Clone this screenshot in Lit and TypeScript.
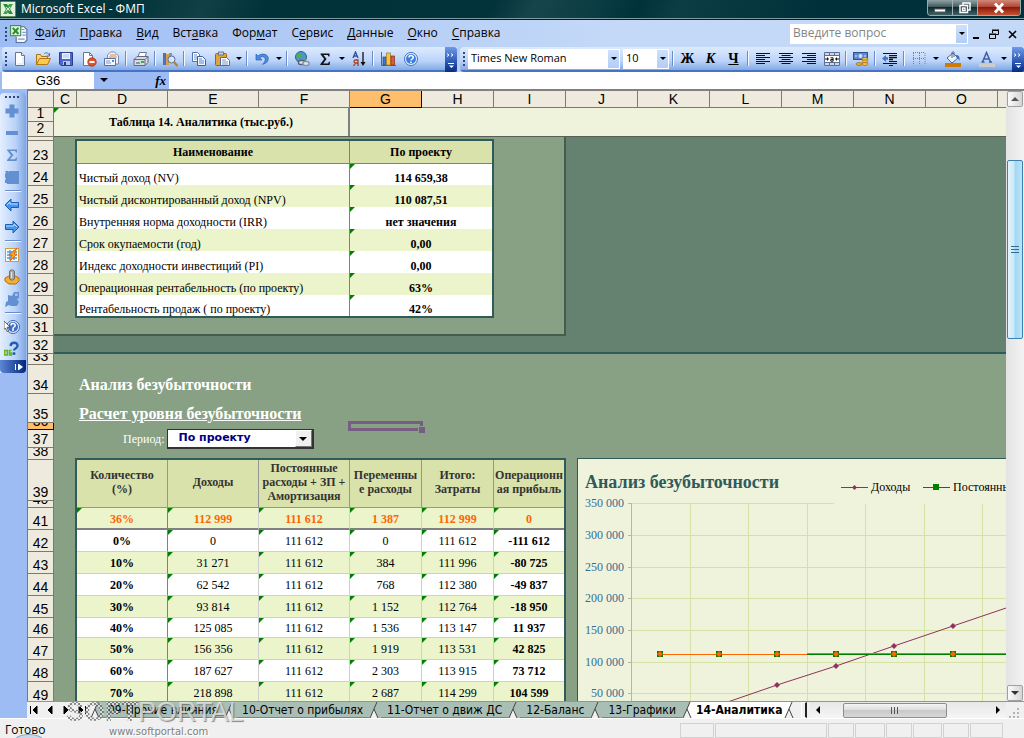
import { LitElement, html, svg, css, nothing } from "lit";
import type { TemplateResult } from "lit";
import { customElement } from "lit/decorators.js";
import { classMap } from "lit/directives/class-map.js";
import { styleMap } from "lit/directives/style-map.js";

const icons: Record<string, TemplateResult> = {
  excel: svg`<rect x=".5" y=".5" width="15" height="15" rx="1" fill="#e4f0dc" stroke="#5b8a55"/><path d="M3 3h4l6 10H9z" fill="#2b8a3a"/><path d="M13 3H9L3 13h4z" fill="#3fa64c"/><path d="M6 6l4 4M10 6l-4 4" stroke="#fff" stroke-width=".8"/>`,
  book: svg`<path d="M6.500 1.500h6l2.500 2.500v9.500l-2 2H5.500v-5" fill="#f4f8ff" stroke="#56719e"/><path d="M10 4h3M11 6.500h3M11 9h3M7 12.500h6" stroke="#7b9bd0"/><rect x=".5" y=".5" width="9" height="9" fill="#e3f2dc" stroke="#4d8a4d"/><path d="M2.500 2.500l5 5.500M7.500 2.500l-5 5.500" stroke="#239036" stroke-width="1.800"/>`,
  fresh: svg`<path d="M3.500 1.500h6l3 3v10h-9z" fill="#fff" stroke="#6a7793"/><path d="M9.500 1.500v3h3" fill="#dfe7f5" stroke="#6a7793"/><path d="M11 6v7H5" fill="none" stroke="#d3dff2"/>`,
  open: svg`<path d="M1.500 13.500v-10h4l1 2h6v2" fill="#f7d774" stroke="#a8741a"/><path d="M1.500 13.500l3-6h11l-3 6z" fill="#fbc94e" stroke="#b5761a"/><path d="M9 3c2-2 4-1.500 5 1M14.500 2v3h-3" fill="none" stroke="#54749e"/>`,
  save: svg`<path d="M1.500 1.500h13v13H3l-1.500-1.500z" fill="#4a66c8" stroke="#2b3f8d"/><rect x="4" y="2" width="8" height="6" fill="#eef3ff"/><path d="M5 4h6M5 6h6" stroke="#a8b9e6"/><rect x="5" y="10" width="7" height="4" fill="#b8c5e8"/><rect x="6" y="11" width="2" height="3" fill="#233a80"/>`,
  lockdoc: svg`<path d="M2.500 1.500h6l3 3v10h-9z" fill="#fff" stroke="#6a7793"/><path d="M8.500 1.500v3h3" fill="none" stroke="#6a7793"/><circle cx="11" cy="11" r="4.200" fill="#e0532d" stroke="#a52f12" stroke-width=".8"/><path d="M8.500 11h5" stroke="#fff" stroke-width="2"/>`,
  mail: svg`<path d="M3.500 7V4l3-3h4l4 4v8h-3" fill="#eef3fc" stroke="#7c8db0"/><path d="M6 4h6M5 6h8" stroke="#d7884d"/><path d="M.5 7.500h11v7H.5z" fill="#f4f7fd" stroke="#5d6f96"/><path d="M2 10h4M2 12h5" stroke="#8397bf"/><rect x="8" y="9" width="2" height="2" fill="#5a83cf"/>`,
  print: svg`<path d="M5 6l1.500-4.500h7L12 6z" fill="#fff" stroke="#6b7894"/><path d="M1 8.500L4 5.500h11v6l-3 3H1z" fill="#d6dbe4" stroke="#606b82"/><path d="M1 8.500h11v6M12 8.500l3-3" fill="none" stroke="#606b82"/><rect x="8" y="10" width="3" height="2" fill="#33b13d"/><path d="M3 12h4" stroke="#444e63"/>`,
  research: svg`<path d="M1 2h3v12H1z" fill="#5070bd"/><path d="M4 3h3v11H4z" fill="#d4a04d"/><path d="M7 2h3v9H7z" fill="#7a94ce"/><path d="M10 3l3 1-1 5h-3z" fill="#c4d2ee"/><circle cx="9.500" cy="8.500" r="3.500" fill="#d9ecff" fill-opacity=".9" stroke="#59708f"/><path d="M12 11l3.500 4" stroke="#b8802b" stroke-width="2.200"/>`,
  copy: svg`<path d="M1.500 1.500h5l2 2v7h-7z" fill="#fff" stroke="#5474b0"/><path d="M3 4h3M3 6h4M3 8h4" stroke="#6c8fd0"/><path d="M6.500 5.500h5l3 3v6h-8z" fill="#f2f7ff" stroke="#3d5fa0"/><path d="M8 8h3M8 10h5M8 12h5" stroke="#5a82cf"/>`,
  paste: svg`<rect x="1.500" y="2.500" width="11" height="12" rx="1" fill="#e0a23e" stroke="#9b6413"/><rect x="4.500" y="1" width="5" height="3" fill="#c7ccd8" stroke="#5f6980" stroke-width=".8"/><path d="M6.500 6.500h6l3 3v5h-9z" fill="#fff" stroke="#5a6a90"/><path d="M8 9h4M8 11h6M8 13h6" stroke="#7b95cc"/>`,
  undo: svg`<path d="M2 3v6h6L5.800 7c2-2.200 5.400-1.500 5.400 1.500 0 2-1.200 3.500-2.700 4.800 4-1 5.800-3 5.800-5.600C14.300 3 8 1.600 4 5z" fill="#4d8be0" stroke="#2860b8" stroke-width=".7"/>`,
  link: svg`<circle cx="7" cy="6" r="5.500" fill="#4c94d6" stroke="#2f6090"/><path d="M3 3c3-2 4 0 6 1 0 2-4 1-4 4-2 0-3-3-2-5z" fill="#4fae4b"/><path d="M9 7c2-1 3 0 2.500 1.500H9z" fill="#4fae4b"/><rect x="4.500" y="9.500" width="6" height="4" rx="2" fill="#dfe4ee" stroke="#57607a" stroke-width="1.400"/><rect x="9" y="10.500" width="6" height="4" rx="2" fill="#dfe4ee" stroke="#8790a6" stroke-width="1.400"/>`,
  sigma: svg`<path d="M3.500 2.500h9v3h-1l-.8-1.500H6.500L9.500 8l-3.300 4.500h4.900l.9-1.800h1l-.4 3.300H3.300v-.8L7.200 8 3.500 3.300z" fill="#111"/>`,
  sort: svg`<path d="M2 7l2.500-6L7 7M3 5h3" fill="none" stroke="#2e4f94" stroke-width="1.300"/><path d="M7 15V9H4.500a1.500 1.500 0 000 3H7M4.500 12L2.500 15" fill="none" stroke="#a0412e" stroke-width="1.300"/><path d="M12 1v12" stroke="#111" stroke-width="1.300"/><path d="M9.500 11h5L12 15z" fill="#111"/>`,
  chart: svg`<path d="M1.500 1v13.500H16" fill="none" stroke="#54658a"/><rect x="3" y="6" width="3" height="8" fill="#4777c9" stroke="#27498e" stroke-width=".7"/><rect x="6.500" y="2" width="4" height="12" fill="#f4c63a" stroke="#a7761a" stroke-width=".7"/><rect x="11" y="5" width="3.500" height="9" fill="#dd5b34" stroke="#8d2c12" stroke-width=".7"/>`,
  help: svg`<circle cx="8" cy="8" r="6.500" fill="#eaf2ff" stroke="#3a72cc"/><circle cx="8" cy="8" r="5" fill="#3d7edb"/><path d="M6 6.500C6 4 10.200 4 10.200 6.400 10.200 8 8 8 8 9.500" fill="none" stroke="#fff" stroke-width="1.500"/><circle cx="8" cy="11.400" r=".9" fill="#fff"/>`,
  left: svg`<path d="M1 2.500h14M1 4.500h9M1 6.500h14M1 8.500h9M1 10.500h14M1 12.500h9" stroke="#111"/>`,
  center: svg`<path d="M1 2.500h14M3.500 4.500h9M1 6.500h14M3.500 8.500h9M1 10.500h14M3.500 12.500h9" stroke="#111"/>`,
  right: svg`<path d="M1 2.500h14M6 4.500h9M1 6.500h14M6 8.500h9M1 10.500h14M6 12.500h9" stroke="#111"/>`,
  merge: svg`<path d="M.5 1.500h15v13H.5z" fill="#fff"/><path d="M.5 1.500h15v3H.5zM.5 11.500h15v3H.5z" fill="#c9d6ee"/><path d="M.5 1.500h15v13H.5zM.5 4.500h15M.5 11.500h15M5.500 1.500v3M10.500 1.500v3M5.500 11.500v3M10.500 11.500v3" fill="none" stroke="#5f6f92"/><path d="M1 8h3M12 8h3" stroke="#111"/><path d="M3 6v4l2-2zM13 6v4l-2-2z" fill="#111"/><path d="M6.500 6.800h2.600v3.400H6.800V8.500h2.300" fill="none" stroke="#111"/>`,
  money: svg`<rect x=".5" y="1.500" width="14" height="7" fill="#5f86cf" stroke="#2f4f94"/><circle cx="7.500" cy="5" r="2" fill="#cfe0ff"/><path d="M3 4v2M12 4v2" stroke="#dfe9ff"/><ellipse cx="12" cy="8" rx="3" ry="1.500" fill="#f4c440" stroke="#9c6a10" stroke-width=".7"/><ellipse cx="12" cy="10.500" rx="3" ry="1.500" fill="#f4c440" stroke="#9c6a10" stroke-width=".7"/><ellipse cx="12" cy="13" rx="3" ry="1.500" fill="#f4c440" stroke="#9c6a10" stroke-width=".7"/><ellipse cx="6" cy="13" rx="3" ry="1.500" fill="#e5ad2e" stroke="#9c6a10" stroke-width=".7"/>`,
  outdent: svg`<path d="M1 2.500h14M7 4.500h8M7 10.500h8M1 12.500h14M7 14.500h4" stroke="#111"/><path d="M7 6.500h8M7 8.500h4" stroke="#111" stroke-width="1.600"/><path d="M0 7.500l4-3.500v2.300h2v2.400H4V11z" fill="#3d76cf"/>`,
  borders: svg`<path d="M2 1.500h12M2 7.500h12M2.500 2v12M8.500 2v12M14 2v12" stroke="#6b83b4" stroke-dasharray="1 1"/><path d="M1 14.500h14" stroke="#a9b4c8"/>`,
  fill: svg`<path d="M2 7l6-5 5 5-6 5z" fill="#edf3fb" stroke="#4c648f"/><path d="M7 7V1.500c0-1 2-1 2 0V6" fill="none" stroke="#4c648f"/><path d="M11 4c3 0 4 2 3.500 6-1-2-2-3-3-3z" fill="#3c6fc0"/><rect x="0" y="12" width="16" height="4" fill="#cf7a00"/>`,
  fontcolor: svg`<path d="M3.500 11l4-9.500L11.500 11M5 8h5M2.500 11h3M10 11h3" fill="none" stroke="#3a5fa5" stroke-width="1.500"/><rect x="0" y="12.500" width="16" height="3.500" fill="#ccc"/>`,
  plus: svg`<path d="M5.500 1.500h5v4h4v5h-4v4h-5v-4h-4v-5h4z" fill="#6390d2"/>`,
  minus: svg`<rect x="2" y="6" width="12" height="4" fill="#6390d2"/>`,
  bigsigma: svg`<path d="M3 2.500h10v3h-1L11 4H6l3.500 4L6 12.300h5l1.200-1.800h1L12.500 14H3v-.9L7 8.200 3 3.300z" fill="#6390d2"/>`,
  shape: svg`<path d="M1 2h3l1 1V2h10v13H3v-1H1v-3l1-1-1-2V5l1-1z" fill="#6390d2"/>`,
  back: svg`<path d="M1 8l6-6v3.500h7.500v5H7V14z" fill="#4496ec" stroke="#1e5cbc"/><path d="M3 8l3-3v2h8" fill="none" stroke="#b6dcff"/>`,
  next: svg`<path d="M15 8L9 2v3.500H1.500v5H9V14z" fill="#4496ec" stroke="#1e5cbc"/><path d="M13 8l-3-3v2H2" fill="none" stroke="#b6dcff"/>`,
  macro: svg`<rect x="1.500" y="1.500" width="13" height="13" fill="#fff" stroke="#d59a3c"/><path d="M3 5h10M3 8h10M3 11h10M6 3v10M10 3v10" stroke="#4f9ad8" stroke-width="1.400"/><path d="M13 1L5 8h3l-2 6 7-7h-3z" fill="#ffa321" stroke="#d4620c" stroke-width=".8"/>`,
  stamp: svg`<path d="M1 9l4-2h6l4 2v3l-3 3H5l-4-3z" fill="#f3ae34" stroke="#b5700e"/><rect x="5.500" y="1" width="5" height="10" rx="2" fill="#a9a9a9" stroke="#6f6f6f"/><path d="M7.500 3v6" stroke="#e5e5e5"/>`,
  blob: svg`<path d="M4 4l4 1 2-4h5v6l-2 1 2 3-2 4H7l-2-1-4 2 1-5 2-1z" fill="#6390d2"/><path d="M11 2.500h2.500v2.500H11z" fill="#a9c5ee"/>`,
  ask: svg`<circle cx="9" cy="8" r="6.500" fill="#e8f1ff" stroke="#3a65b0"/><circle cx="9" cy="8" r="5" fill="#3e6fc8"/><path d="M7 6.500C7 4 11.200 4 11.200 6.400 11.200 8 9 8 9 9.500V12" fill="none" stroke="#fff" stroke-width="1.500"/><path d="M0 2l6 6-3 .3L4.500 12 3 12.500 1.500 9 0 10.500z" fill="#fff" stroke="#333" stroke-width=".7"/>`,
  about: svg`<path d="M6.500 5C7 .5 14 .8 13.500 5c-.2 2.500-3.500 2.500-3.500 4.500" fill="none" stroke="#1f5fb3" stroke-width="2.400"/><circle cx="10" cy="12.500" r="1.500" fill="#1f5fb3"/><path d="M.8 9.500h2.500v4.500H.8zM7.500 9.500H5.300V14h2.200v-2H5.300" fill="none" stroke="#5db515" stroke-width="1.400"/>`,
};

const icon = (name: string) =>
  html`<svg class="icon" viewBox="0 0 16 16" aria-hidden="true">${icons[name]}</svg>`;

const menus: [string, string, string][] = [
  ["", "Ф", "айл"], ["", "П", "равка"], ["", "В", "ид"], ["Вст", "а", "вка"], ["Фор", "м", "ат"],
  ["С", "е", "рвис"], ["", "Д", "анные"], ["", "О", "кно"], ["", "С", "правка"],
];

const standardBar = ["fresh", "open", "save", "lockdoc", "mail", "|", "print", "|", "research", "|", "copy", "paste", "v", "|", "undo", "v", "|", "link", "sigma", "v", "sort", "|", "chart", "help"];
const formatBar = ["|", "Ж", "К", "Ч", "|", "left", "center", "right", "merge", "|", "money", "|", "outdent", "|", "borders", "v", "fill", "v", "fontcolor", "v"];
const sideBar = ["plus", "minus", "bigsigma", "shape", "|", "back", "next", "|", "macro", "stamp", "blob", "|", "ask", "about"];

const columns: [string, number][] = [
  ["C", 23], ["D", 91], ["E", 91], ["F", 91], ["G", 72], ["H", 72], ["I", 72],
  ["J", 72], ["K", 72], ["L", 72], ["M", 72], ["N", 72], ["O", 72],
];

const rows: [string, number][] = [
  ["", 4], ["23", 23], ["24", 22], ["25", 22], ["26", 22], ["27", 22], ["28", 22], ["29", 22], ["30", 22],
  ["31", 18], ["32", 18], ["33", 11], ["34", 29], ["35", 29], ["36", 7], ["37", 18], ["38", 12],
  ["39", 41], ["40", 7], ["41", 22], ["42", 22], ["43", 22], ["44", 22], ["45", 22], ["46", 20],
  ["47", 22], ["48", 22], ["49", 22],
];

const summary: [string, string][] = [
  ["Чистый доход (NV)", "114 659,38"],
  ["Чистый дисконтированный доход (NPV)", "110 087,51"],
  ["Внутренняя норма доходности (IRR)", "нет значения"],
  ["Срок окупаемости (год)", "0,00"],
  ["Индекс доходности инвестиций (PI)", "0,00"],
  ["Операционная рентабельность (по проекту)", "63%"],
  ["Рентабельность продаж ( по проекту)", "42%"],
];

const analysisHead = [
  ["Количество", "(%)"], ["Доходы"], ["Постоянные", "расходы + ЗП +", "Амортизация"],
  ["Переменны", "е расходы"], ["Итого:", "Затраты"], ["Операционн", "ая прибыль"],
];

const analysis: string[][] = [
  ["36%", "112 999", "111 612", "1 387", "112 999", "0"],
  ["0%", "0", "111 612", "0", "111 612", "-111 612"],
  ["10%", "31 271", "111 612", "384", "111 996", "-80 725"],
  ["20%", "62 542", "111 612", "768", "112 380", "-49 837"],
  ["30%", "93 814", "111 612", "1 152", "112 764", "-18 950"],
  ["40%", "125 085", "111 612", "1 536", "113 147", "11 937"],
  ["50%", "156 356", "111 612", "1 919", "113 531", "42 825"],
  ["60%", "187 627", "111 612", "2 303", "113 915", "73 712"],
  ["70%", "218 898", "111 612", "2 687", "114 299", "104 599"],
];

const sheetTabs = ["09-Прочие влияния", "10-Отчет о прибылях", "11-Отчет о движ ДС", "12-Баланс", "13-Графики"];
const statusCells = [34, 112, 26, 30, 26, 29, 26, 33];

const num = (text: string) => Number(text.replace(/\s/g, ""));
const chartX = (i: number) => Math.round(82 + i * 58.6);
const chartY = (value: number) => Math.round(266 - (value * 190) / 300000);

@customElement("app-root")
export class AppRoot extends LitElement {
  static styles = css`
    :host { display: block; height: 100vh; overflow: hidden; --ui: "Open Sans", "Noto Sans", sans-serif; --serif: "Liberation Serif", serif; --sans: "Liberation Sans", sans-serif; --tab: "DejaVu Sans Condensed", "DejaVu Sans", sans-serif; font: 12px/16px var(--ui); color: #000; }
    * { box-sizing: border-box; }
    button, select, input { font: inherit; color: inherit; border: 0; padding: 0; margin: 0; background: none; border-radius: 0; }
    select { appearance: none; }
    .app { display: flex; flex-direction: column; height: 100%; background: #9ebcf4; position: relative; }
    .icon { width: 16px; height: 16px; display: block; flex: none; }

    .title { height: 20px; flex: none; display: flex; align-items: center; gap: 5px; color: #fff; padding-bottom: 2px; border-bottom: 1px solid #06171c; box-shadow: inset 0 -1px #7f9da0; background: linear-gradient(115deg, #0b4045 0%, #01333a 12%, #114046 20%, #01323a 26%, #02333b 48%, #17454b 52%, #0b3d44 58%, #00323a 62%, #0c3c44 66%, #00313a 80%); }
    .title h1 { font: 12px/16px var(--ui); margin: 0; flex: 1; }
    .winbtns { display: flex; align-self: flex-start; height: 16px; margin-right: 3px; border: 1px solid #98a9ac; border-top: 0; border-radius: 0 0 4px 4px; overflow: hidden; }
    .winbtns button { width: 25px; display: grid; place-items: center; background: linear-gradient(#8fa3a6, #41585d 45%, #0c2a30 50%, #3f6266); border-right: 1px solid #a3b1b3; }
    .winbtns .close { width: 42px; border: 0; background: linear-gradient(#d08878, #b24736 45%, #8d1a0b 50%, #c65232); }

    .menubar { height: 27px; flex: none; display: flex; align-items: center; padding-left: 5px; background: linear-gradient(90deg, #9ebcf4, #c4d9f8 60%, #c4d8f8); }
    .grip { height: 14px; flex: none; background: repeating-linear-gradient(#30487e 0 2px, transparent 2px 4px); width: 2px; }
    .menubar .icon { width: 18px; height: 18px; margin: 0 1px 0 3px; }
    .menubar nav { flex: 1; display: flex; padding: 0 0 1px 6px; gap: 14px; }
    u { text-decoration-thickness: 1px; text-underline-offset: 2px; }
    .ask { display: flex; width: 178px; height: 20px; background: #fff; border: 1px solid #fff; }
    .ask input { flex: 1; min-width: 0; padding: 0 2px 2px; outline: 0; }
    .ask input::placeholder { color: #858585; opacity: 1; }
    .dropbtn { width: 11px; display: grid; place-items: center; background: linear-gradient(#cfe0fb, #b2cdf6); }
    .tri { width: 0; height: 0; border: 3px solid transparent; border-top-color: #000; border-bottom: 0; }
    .docbtns { display: flex; gap: 2px; margin-right: 4px; }
    .docbtns button { width: 16px; height: 16px; }

    .bars { height: 25px; flex: none; display: flex; gap: 3px; background: #b5cff8; }
    .bar { display: flex; align-items: center; background: linear-gradient(#deebfe, #bcd4f9 55%, #82a9e4 92%, #4773c4 93%); border-radius: 4px 0 0 4px; padding-bottom: 2px; }
    .bar.first { width: 455px; margin-left: 2px; flex: none; }
    .bar.second { flex: 1; min-width: 0; overflow: hidden; }
    .bar .grip { margin: 0 1px 0 3px; }
    .tool { width: 23px; height: 22px; flex: none; display: grid; place-items: center; }
    .tool.letter { font: bold 14px/20px var(--serif); }
    .tool.italic { font-style: italic; }
    .tool.under { text-decoration: underline; }
    .drop { width: 11px; height: 22px; flex: none; display: grid; place-items: center; }
    .sep { width: 2px; height: 15px; flex: none; background: linear-gradient(90deg, #6a8ccb 50%, #f4f8ff 50%); margin: 0 2px; }
    .more { width: 12px; align-self: stretch; margin: 0 0 -2px auto; flex: none; background: linear-gradient(#6f99e6, #2a57b2 60%, #062d7f); border-radius: 0 3px 3px 0; display: grid; place-items: center; }
    .combo { position: relative; height: 20px; flex: none; background: #fff; display: flex; margin-right: 3px; border: 1px solid #fff; font-size: 11px; }
    .combo select { width: 100%; padding: 0 14px 2px 2px; outline: 0; }
    .combo.face { width: 152px; margin-left: 2px; }
    .combo.size { width: 46px; margin-right: 1px; }
    .combo .dropbtn { position: absolute; right: 0; top: 0; bottom: 0; pointer-events: none; }

    .formula { height: 17px; flex: none; display: flex; padding-left: 2px; font: 13px/16px var(--sans); }
    .formula input { outline: 0; }
    .name { width: 92px; background: #fff; text-align: center; }
    .formula .drop { width: 20px; height: 16px; }
    .formula .drop .tri { border-width: 4px 4px 0; }
    .fx { flex: none; width: 55px; text-align: right; padding-right: 3px; font: italic bold 13px/16px var(--serif); }
    .expr { flex: 1; background: #fff; }

    .work { flex: 1; min-height: 0; display: flex; }
    .side { width: 27px; flex: none; padding: 4px 1px 0 0; }
    .sidebar { display: flex; flex-direction: column; align-items: center; background: linear-gradient(90deg, #e4effe, #b9d2f8 60%, #7fa5e0); border-radius: 4px 4px 4px 0; padding-top: 3px; }
    .sidebar .dots { width: 16px; height: 2px; background: repeating-linear-gradient(90deg, #30487e 0 2px, transparent 2px 4px); margin-bottom: 2px; }
    .sidebar button { width: 24px; height: 22px; display: grid; place-items: center; padding-right: 2px; }
    .sidebar hr { width: 16px; height: 2px; margin: 2px 0; border: 0; background: linear-gradient(#6a8ccb 50%, #f4f8ff 50%); }
    .sidebar .end { width: 100%; height: 13px; background: linear-gradient(90deg, #5c86d6, #00277c); border-radius: 0 0 4px 4px; display: flex; justify-content: flex-end; padding-right: 2px; }

    .book { flex: 1; min-width: 0; display: grid; grid-template: 46px minmax(0, 1fr) 17px / minmax(0, 1fr) 18px; border-top: 2px solid #808080; background: #f0f0f0; }
    .frozen { overflow: hidden; display: flex; flex-direction: column; }
    .cols { display: flex; height: 17px; flex: none; }
    .head { background: #eeebde; border: 0 solid #7e7a6b; border-width: 0 1px 1px 0; flex: none; display: flex; justify-content: center; align-items: flex-end; overflow: hidden; font: 14px/16px var(--sans); }
    .corner { width: 27px; border-left: 1px solid #7e7a6b; }
    .rest { flex: 1; border-right: 0; }
    .picked { background: #ffbe6b; border-color: #00007b; }
    .rowheads { width: 27px; flex: none; border-left: 1px solid #7e7a6b; background: #eeebde; display: flex; flex-direction: column; }
    .top { display: flex; flex: 1; }
    .banner { flex: 1; display: flex; background: #f0f3dc; border-bottom: 1px solid #5a5f55; font: bold 12px/28px var(--serif); }
    .banner h2 { position: relative; width: 296px; border-right: 2px solid #808080; text-align: center; font: inherit; margin: 0; }
    .scroll { overflow: hidden; display: flex; }
    .sheet { flex: 1; min-width: 0; background: #658270; overflow: hidden; display: flex; flex-direction: column; font: 12px/14px var(--serif); }

    .panel { width: 512px; flex: none; background: #88a083; border: solid #465c4e; border-width: 0 2px 2px 0; padding: 2px 0 16px 21px; }
    table { border-collapse: separate; border-spacing: 0; table-layout: fixed; border: 2px solid #2f5b5a; background: #fff; }
    th, td { padding: 0; position: relative; overflow: hidden; }
    th { background: #d9e2aa; }
    .err::before { content: ""; position: absolute; left: 0; top: 0; border: 5px solid transparent; border-width: 5px 5px 0 0; border-top-color: #008000; }
    .summary { width: 419px; }
    .summary th { height: 23px; border-bottom: 1px solid #808080; }
    .summary th:first-child, .summary td:first-child { border-right: 1px solid #808080; width: 273px; }
    .summary td { height: 22px; vertical-align: bottom; padding: 0 2px; white-space: nowrap; }
    .summary tr:first-child td, .summary tr:last-child td { height: 21px; }
    .summary td + td { font-weight: bold; text-align: center; }
    tr.alt td { background: #ebf4cb; }

    .zone { flex: 1; min-height: 0; margin-top: 16px; background: #88a083; border-top: 2px solid #2f5b5a; position: relative; }
    .zone h2, .zone h3 { color: #fff; margin: 0 0 0 25px; font: bold 16px/17px var(--serif); }
    .zone h2 { padding-top: 22px; }
    .zone h3 { padding-top: 12px; text-decoration: underline; text-decoration-thickness: 1px; }
    .period { display: flex; align-items: center; height: 20px; margin: 7px 0 0 69px; gap: 2px; }
    .period label { color: #fff; }
    .pick { position: relative; width: 147px; height: 20px; background: #fff; border: 1px solid #333; border-width: 1px 2px 2px 1px; display: flex; }
    .pick select { width: 100%; padding: 0 18px 1px 11px; font: bold 11px/14px "DejaVu Sans", sans-serif; color: #000080; outline: 0; }
    .pick .box { position: absolute; right: 0; top: 0; width: 17px; height: 17px; background: #f0f0f0; border: 1px solid #fff; border-right-color: #777; border-bottom-color: #777; display: grid; place-items: center; pointer-events: none; }
    .pick .tri { border-width: 4px 4px 0; }
    .cursor { position: absolute; left: 294px; top: 67px; width: 75px; height: 10px; border: 3px solid #785d83; }
    .cursor::after { content: ""; position: absolute; right: -5px; bottom: -5px; width: 6px; height: 6px; background: #785d83; border: solid #88a083; border-width: 1px 0 0 1px; }
    .lower { display: flex; gap: 11px; margin: 9px 0 0 21px; align-items: flex-start; }
    .analysis { width: 491px; flex: none; }
    .analysis th { height: 48px; color: #333; border: solid #969696; border-width: 0 1px 1px 0; font-size: 12px; vertical-align: middle; padding-bottom: 4px; white-space: nowrap; }
    .analysis td { height: 22px; text-align: center; border: solid #cfcfcf; border-width: 0 1px 1px 0; }
    .analysis td:first-child { border-right-color: #808080; font-weight: bold; }
    .analysis td:last-child { font-weight: bold; }
    .analysis td:last-child, .analysis th:last-child { border-right: 0; }
    .analysis tr.even td { color: #ff6600; font-weight: bold; border-bottom: 2px solid #808080; padding-top: 2px; }
    .analysis tr.short td { height: 20px; }
    .w91 { width: 91px; } .w72 { width: 72px; }
    .chart { flex: 1; min-width: 0; height: 320px; border: solid #2f5b5a; border-width: 1px 0 0 1px; background: #f0f3dc; }
    .chart svg { display: block; width: 100%; height: 320px; }
    .chart text { font-family: "Liberation Serif", serif; }

    .vbar { grid-column: 2; grid-row: 1 / 3; display: flex; flex-direction: column; background: linear-gradient(90deg, #e3e3e3, #f3f3f3); padding: 0 1px; }
    .sbtn { width: 16px; height: 16px; flex: none; display: grid; place-items: center; border: 1px solid #a0a0a0; border-radius: 2px; background: linear-gradient(90deg, #fbfbfb, #d5d5d5); }
    .vtrack { flex: 1; display: flex; flex-direction: column; }
    .vthumb { margin-top: 53px; height: 31%; border: 1px solid #3c7fb1; border-radius: 2px; background: linear-gradient(90deg, #e3f4fc, #c6e8f9 45%, #a0d6f3 50%, #bde4f8); display: grid; place-items: center; }
    .up { border: 4px solid transparent; border-top: 0; border-bottom-color: #555; }
    .down { border: 4px solid transparent; border-bottom: 0; border-top-color: #333; }

    .tabs { display: flex; border-top: 1px solid #8a9a90; grid-column: 1 / 3; font: 12px/16px var(--tab); height: 17px; min-width: 0; }
    .nav { display: flex; width: 63px; flex: none; gap: 2px; }
    .nav button { width: 14px; display: grid; place-items: center; }
    .tabstrip { display: flex; flex: none; }
    .tab { background: #a9bfb5; border-bottom: 1px solid #77877d; height: 16px; padding: 0 6px; white-space: nowrap; }
    .tab.on { background: #fff; font-weight: bold; padding: 0 2px; border: 0; }
    .edge { width: 12px; height: 16px; flex: none; display: block; }
    .split { width: 6px; background: #f0f0f0; border: 1px solid #fff; border-right: 2px solid #222; margin-left: 5px; flex: none; }
    .hbar { flex: 1; min-width: 0; display: flex; align-items: center; background: linear-gradient(#e7e7e7, #f5f5f5); margin-left: 3px; }
    .hbar button { width: 16px; height: 16px; display: grid; place-items: center; flex: none; }
    .hbar .track { flex: 1; padding-left: 17px; }
    .hthumb { width: 71%; height: 15px; border: 1px solid #8e8e8e; border-radius: 2px; background: linear-gradient(#f4f4f4, #dedede 45%, #c9c9c9 50%, #d9d9d9); display: grid; place-items: center; }
    .resize { width: 18px; flex: none; align-self: flex-end; }

    .status { height: 20px; flex: none; display: flex; align-items: center; gap: 1px; padding: 3px 21px 0 5px; background: #f0f0f0; border-top: 1px solid #fff; position: relative; overflow: hidden; }
    .status p { margin: 0; flex: 1; }
    .cell { height: 15px; border: 1px solid #d2d2d2; }
    .orb { position: absolute; left: 15px; bottom: -8px; width: 28px; height: 12px; border-radius: 50%; border: 1px solid #8aa2ba; background: #c6d9ec; }

    .mark { position: absolute; left: 66px; bottom: 0; width: 190px; height: 40px; pointer-events: none; font: 27px/28px var(--sans); white-space: nowrap; }
    .mark .soft { font-weight: bold; color: transparent; background: repeating-conic-gradient(rgba(90, 90, 90, .7) 0 25%, rgba(235, 235, 235, .7) 0 50%) 0 0 / 4px 4px; background-clip: text; -webkit-background-clip: text; }
    .mark .portal { color: rgba(235, 235, 235, .75); text-shadow: 1px 1px 1px rgba(90, 90, 90, .7); }
    .mark .url { display: block; font: 10px/12px "DejaVu Sans", sans-serif; color: #808080; text-shadow: 1px 1px #fff; margin-left: 43px; }
  `;

  private tools(items: string[]) {
    return items.map((item) => {
      if (item === "|") return html`<span class="sep"></span>`;
      if (item === "v") return html`<button class="drop" aria-label="Ещё"><span class="tri"></span></button>`;
      if (item.length === 1)
        return html`<button class=${classMap({ tool: true, letter: true, italic: item === "К", under: item === "Ч" })}>${item}</button>`;
      return html`<button class="tool" aria-label=${item}>${icon(item)}</button>`;
    });
  }

  private more() {
    return html`<button class="more" aria-label="Параметры панели"><svg width="10" height="20" viewBox="0 0 10 20" fill="none" stroke="#fff"><path d="M1 3.500l2 1.500-2 1.500M5 3.500L7 5 5 6.500M2 13.500h6" /><path d="M3 15.500h5L5.500 18z" fill="#fff" stroke="none" /></svg></button>`;
  }

  private rowHead([label, height]: [string, number]) {
    return html`<div class=${classMap({ head: true, picked: label === "36" })} style=${styleMap({ height: `${height}px` })}>${label}</div>`;
  }

  private edge(left: string, right: string) {
    return html`<svg class="edge" viewBox="0 0 12 16" aria-hidden="true"><path d="M0 0h8L1 16H0z" fill=${left}/><path d="M5 7L9 16h3V0H8z" fill=${right}/><path d="M5 7L1 16h8z" fill="#f0f0f0"/><path d="M8 0L1 16M5 7l4 9" stroke="#444" fill="none"/></svg>`;
  }

  private chart() {
    const data = analysis.slice(1);
    const line = (col: number) => data.map((r, i) => `${chartX(i)},${chartY(num(r[col]))}`).join(" ");
    return html`<div class="chart"><svg role="img" aria-label="Анализ безубыточности">
      ${[0, 1, 2, 3, 4, 5, 6].map((i) => {
        const y = chartY(350000 - i * 50000);
        return svg`<path d="M53 ${y + 0.5}H${i ? 2000 : 256}" stroke="#d6e1a6"/><path d="M50 ${y + 0.5}h4" stroke="#b5b5b5"/>
        <text x="46" y=${y + 4} text-anchor="end" font-size="12" fill="#336e93">${350 - i * 50} 000</text>`;
      })}
      ${[1, 2, 3, 4, 5, 6, 7, 8].map((i) => svg`<path d="M${Math.round(54 + i * 58.500) - 0.5} 45V320" stroke="#d6e1a6"/>`)}
      <path d="M53.500 44V320" stroke="#b5b5b5"/>
      <text x="7" y="29" font-size="18" font-weight="bold" fill="#2f5b5a">Анализ безубыточности</text>
      <path d="M263 28.500h27" stroke="#8f3060"/><path d="M276.500 26l2.500 2.500-2.500 2.500-2.500-2.500z" fill="#8f3060"/>
      <text x="293" y="32" font-size="12">Доходы</text>
      <path d="M345 28.500h27" stroke="#008000"/><path d="M355 25h6v6h-6z" fill="#008000"/>
      <text x="375" y="32" font-size="12">Постоянные</text>
      <polyline points=${line(1)} fill="none" stroke="#8f3060"/>
      ${data.map((r, i) => svg`<path transform="translate(${chartX(i)} ${chartY(num(r[1]))})" d="M0-3L3 0 0 3-3 0z" fill="#8f3060"/>`)}
      <path d="M82 195.500H229" stroke="#ff6600"/><path d="M229 195.500H2000" stroke="#008000"/><path d="M229 194.500H2000" stroke="#ff6600"/>
      ${data.map((_, i) => svg`<g transform="translate(${chartX(i)} 195)"><path d="M-3-3h6v6h-6z" fill="#008000"/><path d="M0-3L3 0 0 3-3 0z" fill="#ff6600"/></g>`)}
    </svg></div>`;
  }

  render() {
    return html`<div class="app">
      <header class="title">
        ${icon("excel")}<h1>Microsoft Excel - ФМП</h1>
        <div class="winbtns">
          <button aria-label="Свернуть"><svg width="12" height="12"><rect x=".5" y="7" width="11" height="3" fill="#fff" stroke="#555"/></svg></button>
          <button aria-label="Развернуть"><svg width="12" height="12" fill="none" stroke="#fff" stroke-width="1.500"><path d="M4 3V1h7v7H9M1 3.500h7.500v7H1zM3.500 6h2.500v2.500H3.500z"/></svg></button>
          <button class="close" aria-label="Закрыть"><svg width="12" height="12"><path d="M2 1.500l8 9M10 1.500l-8 9" stroke="#fff" stroke-width="2.800"/></svg></button>
        </div>
      </header>
      <div class="menubar">
        <span class="grip"></span>${icon("book")}
        <nav>${menus.map(([a, b, c]) => html`<button>${a}<u>${b}</u>${c}</button>`)}</nav>
        <div class="ask"><input aria-label="Вопрос" placeholder="Введите вопрос" /><button class="dropbtn" aria-label="Список"><span class="tri"></span></button></div>
        <div class="docbtns">
          <button aria-label="Свернуть книгу"><svg width="16" height="16"><path d="M5 12h6" stroke="#000" stroke-width="2"/></svg></button>
          <button aria-label="Восстановить книгу"><svg width="16" height="16" fill="none" stroke="#000"><path d="M6.500 7V4.500h6v4H10M6 4h7M3.500 8.500h6v4h-6zM3 8h7"/></svg></button>
          <button aria-label="Закрыть книгу"><svg width="16" height="16"><path d="M5 5l7 7M12 5l-7 7" stroke="#000" stroke-width="1.600"/></svg></button>
        </div>
      </div>
      <div class="bars">
        <div class="bar first"><span class="grip"></span>${this.tools(standardBar)}${this.more()}</div>
        <div class="bar second"><span class="grip"></span>
          <div class="combo face"><select aria-label="Шрифт"><option>Times New Roman</option></select><span class="dropbtn"><span class="tri"></span></span></div>
          <div class="combo size"><select aria-label="Размер"><option>10</option></select><span class="dropbtn"><span class="tri"></span></span></div>
          ${this.tools(formatBar)}${this.more()}
        </div>
      </div>
      <div class="formula">
        <input class="name" aria-label="Имя" value="G36" /><button class="drop" aria-label="Имена"><span class="tri"></span></button>
        <button class="fx">fx</button><input class="expr" aria-label="Строка формул" />
      </div>
      <div class="work">
        <div class="side"><div class="sidebar"><span class="dots"></span>
          ${sideBar.map((s) => (s === "|" ? html`<hr />` : html`<button aria-label=${s}>${icon(s)}</button>`))}
          <div class="end"><svg width="10" height="14" fill="none" stroke="#fff"><path d="M1.500 4v6M4.500 4v6"/><path d="M5 4l4 3-4 3z" fill="#fff" stroke="none"/></svg></div>
        </div></div>
        <main class="book">
          <div class="frozen">
            <div class="cols"><div class="head corner"></div>
              ${columns.map(([c, w]) => html`<div class=${classMap({ head: true, picked: c === "G" })} style=${styleMap({ width: `${w}px` })}>${c}</div>`)}
              <div class="head rest"></div>
            </div>
            <div class="top">
              <div class="rowheads">${this.rowHead(["1", 14])}${this.rowHead(["2", 15])}</div>
              <div class="banner"><h2 class="err">Таблица 14. Аналитика (тыс.руб.)</h2></div>
            </div>
          </div>
          <div class="vbar">
            <button class="sbtn" aria-label="Вверх"><span class="up"></span></button>
            <div class="vtrack"><div class="vthumb"><svg width="8" height="8" stroke="#2f6d92"><path d="M0 .5h8M0 3.500h8M0 6.500h8"/></svg></div></div>
            <button class="sbtn" aria-label="Вниз"><span class="down"></span></button>
          </div>
          <div class="scroll">
            <div class="rowheads">${rows.map((r) => this.rowHead(r))}</div>
            <div class="sheet">
              <section class="panel">
                <table class="summary"><thead><tr><th>Наименование</th><th>По проекту</th></tr></thead>
                  <tbody>${summary.map(([k, v], i) => html`<tr class=${i % 2 ? "alt" : nothing}><td>${k}</td><td class="err">${v}</td></tr>`)}</tbody></table>
              </section>
              <section class="zone">
                <h2>Анализ безубыточности</h2>
                <h3>Расчет уровня безубыточности</h3>
                <div class="period"><label for="period">Период:</label>
                  <div class="pick"><select id="period"><option>По проекту</option></select><span class="box"><span class="tri"></span></span></div>
                </div>
                <div class="cursor"></div>
                <div class="lower">
                  <table class="analysis">
                    <colgroup><col class="w91" /><col class="w91" /><col class="w91" /><col class="w72" /><col class="w72" /><col /></colgroup>
                    <thead><tr>${analysisHead.map((h) => html`<th>${h.map((l, i) => html`${i ? html`<br />` : nothing}${l}`)}</th>`)}</tr></thead>
                    <tbody>${analysis.map((r, i) => html`<tr class=${classMap({ alt: i % 2 === 0, even: i === 0, short: r[0] === "40%" })}>
                      ${r.map((v, c) => html`<td class=${c || !i ? "err" : nothing}>${v}</td>`)}</tr>`)}</tbody>
                  </table>
                  ${this.chart()}
                </div>
              </section>
            </div>
          </div>
          <div class="tabs">
            <div class="nav">
              ${["M3.500 4v8M10 4L6 8l4 4z", "M9 4L5 8l4 4z", "M5 4l4 4-4 4z", "M4 4l4 4-4 4zM10.500 4v8"].map((d) => html`<button aria-label="Листы"><svg width="14" height="16"><path d=${d} stroke="#000" stroke-width="1"/></svg></button>`)}
            </div>
            <div class="tabstrip">
              ${sheetTabs.map((t, i) => html`${this.edge(i ? "#a9bfb5" : "#f0f0f0", "#a9bfb5")}<button class="tab">${t}</button>`)}
              ${this.edge("#a9bfb5", "#fff")}<button class="tab on">14-Аналитика</button>${this.edge("#fff", "#f0f0f0")}
            </div>
            <div class="split"></div>
            <div class="hbar">
              <button aria-label="Влево"><svg width="8" height="8"><path d="M6 0L2 4l4 4z"/></svg></button>
              <div class="track"><div class="hthumb"><svg width="8" height="7" stroke="#555"><path d="M.5 0v7M3.500 0v7M6.500 0v7"/></svg></div></div>
              <button aria-label="Вправо"><svg width="8" height="8"><path d="M2 0l4 4-4 4z"/></svg></button>
            </div>
            <svg class="resize" width="18" height="14" fill="#b4b4b4"><path d="M11 4h2v2h-2zM11 8h2v2h-2zM11 12h2v2h-2zM7 8h2v2H7zM7 12h2v2H7zM3 12h2v2H3z"/></svg>
          </div>
        </main>
      </div>
      <footer class="status"><p>Готово</p>
        ${statusCells.map((w) => html`<span class="cell" style=${styleMap({ width: `${w}px` })}></span>`)}
        <span class="orb"></span>
      </footer>
      <div class="mark"><span class="soft">SOFT</span><span class="portal">PORTAL</span><span class="url">www.softportal.com</span></div>
    </div>`;
  }
}
